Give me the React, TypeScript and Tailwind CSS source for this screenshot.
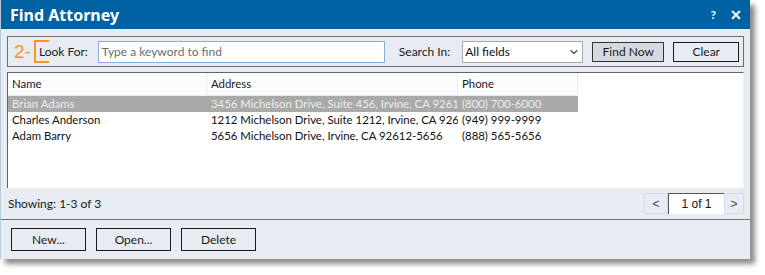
import { ChevronDown } from 'lucide-react';

const rows = [
  { name: 'Brian Adams', address: '3456 Michelson Drive, Suite 456, Irvine, CA 9261', phone: '(800) 700-6000', selected: true },
  { name: 'Charles Anderson', address: '1212 Michelson Drive, Suite 1212, Irvine, CA 926', phone: '(949) 999-9999' },
  { name: 'Adam Barry', address: '5656 Michelson Drive, Irvine, CA 92612-5656', phone: '(888) 565-5656' },
];

function Btn({ label, className }: { label: string; className?: string }) {
  return (
    <button className={`shrink-0 flex items-center justify-center border border-[#1a1a1a] text-[12px] text-[#1a1a1a] ${className ?? ''}`}>
      {label}
    </button>
  );
}

export default function App() {
  return (
    <div className="bg-white w-[765px] h-[275px] font-['Lato','Noto_Sans',sans-serif]">
      <div className="w-[750px] h-[259px] bg-[#e7ebf2] border-l border-[#b9c7d8] flex flex-col shadow-[5px_5px_5px_rgba(0,0,0,0.45)]">
        <div className="h-[29px] shrink-0 bg-[#0062a3] flex items-center justify-between pl-[9px] pr-[8px]">
          <span className="text-white font-bold text-[16px] leading-none font-['Noto_Sans',sans-serif]">Find Attorney</span>
          <div className="flex items-center gap-[14px] text-white font-bold text-[12px]">
            <span>?</span>
            <span className="text-[14px] leading-none">✕</span>
          </div>
        </div>

        <div className="mt-[7px] mx-[6px] h-[31px] border border-[#6e6e6e] flex items-center text-[12px] text-[#1a1a1a] whitespace-nowrap">
          <span className="shrink-0 text-[#f5961e] text-[19px] leading-none ml-[6px] font-['Liberation_Sans',sans-serif]">2-</span>
          <div className="shrink-0 ml-[3px] h-[23px] w-[15px] border-[2px] border-r-0 border-[#f5961e]" />
          <span className="shrink-0 -ml-[10px]">Look For:</span>
          <div className="shrink-0 ml-[10px] w-[287px] h-[22px] bg-white border border-[#86aee0] flex items-center px-[3px] text-[#6d6d6d]">
            Type a keyword to find
          </div>
          <span className="shrink-0 ml-[14px]">Search In:</span>
          <div className="shrink-0 ml-[12px] w-[121px] h-[22px] bg-white border border-[#a9a9a9] flex items-center justify-between pl-[2px] pr-[2px] text-[#111]">
            All fields
            <ChevronDown className="w-[12px] h-[12px] text-[#555]" strokeWidth={2.5} />
          </div>
          <Btn label="Find Now" className="ml-[9px] w-[72px] h-[20px] bg-[#d5d8dd] border-[#333]" />
          <Btn label="Clear" className="ml-[9px] w-[66px] h-[20px] bg-[#e7ebf2]" />
        </div>

        <div className="mt-[5px] mx-[6px] h-[116px] bg-white border-l border-t border-[#646464] border-r border-r-[#f2f2f2] text-[11.4px]">
          <div className="flex w-[570px] h-[23px] bg-[#fbfcfe] border-b border-[#e6ecf7] text-[#1a1a1a]">
            <div className="w-[199px] border-r border-[#e6ecf7] pl-[4px] flex items-center">Name</div>
            <div className="w-[251px] border-r border-[#e6ecf7] pl-[4px] flex items-center">Address</div>
            <div className="w-[120px] border-r border-[#e6ecf7] pl-[4px] flex items-center">Phone</div>
          </div>
          {rows.map((r) => (
            <div
              key={r.name}
              className={`flex w-[570px] h-[16px] items-center ${r.selected ? 'bg-[#a9a9a9] text-[#ececec]' : 'text-[#111]'}`}
            >
              <div className="w-[199px] pl-[4px] whitespace-nowrap overflow-hidden">{r.name}</div>
              <div className="w-[251px] pl-[4px] whitespace-nowrap overflow-hidden">{r.address}</div>
              <div className="w-[120px] pl-[4px] whitespace-nowrap overflow-hidden">{r.phone}</div>
            </div>
          ))}
        </div>

        <div className="h-[31px] mx-[6px] flex items-center justify-between text-[12px] text-[#1a1a1a]">
          <span className="ml-[1px]">Showing: 1-3 of 3</span>
          <div className="flex h-[21px] font-['Liberation_Sans',sans-serif] text-[12px]">
            <div className="w-[24px] border border-[#d3dbe8] flex items-center justify-center text-[#444]">&lt;</div>
            <div className="w-[56px] bg-white border-l border-t border-[#555] flex items-center justify-center text-[#111]">1 of 1</div>
            <div className="w-[20px] border border-[#d3dbe8] flex items-center justify-center text-[#444]">&gt;</div>
          </div>
        </div>

        <div className="h-px bg-[#6e6e6e]" />

        <div className="flex gap-[10px] mt-[8px] ml-[10px]">
          <Btn label="New..." className="w-[75px] h-[23px]" />
          <Btn label="Open..." className="w-[75px] h-[23px]" />
          <Btn label="Delete" className="w-[75px] h-[23px]" />
        </div>
      </div>
    </div>
  );
}
